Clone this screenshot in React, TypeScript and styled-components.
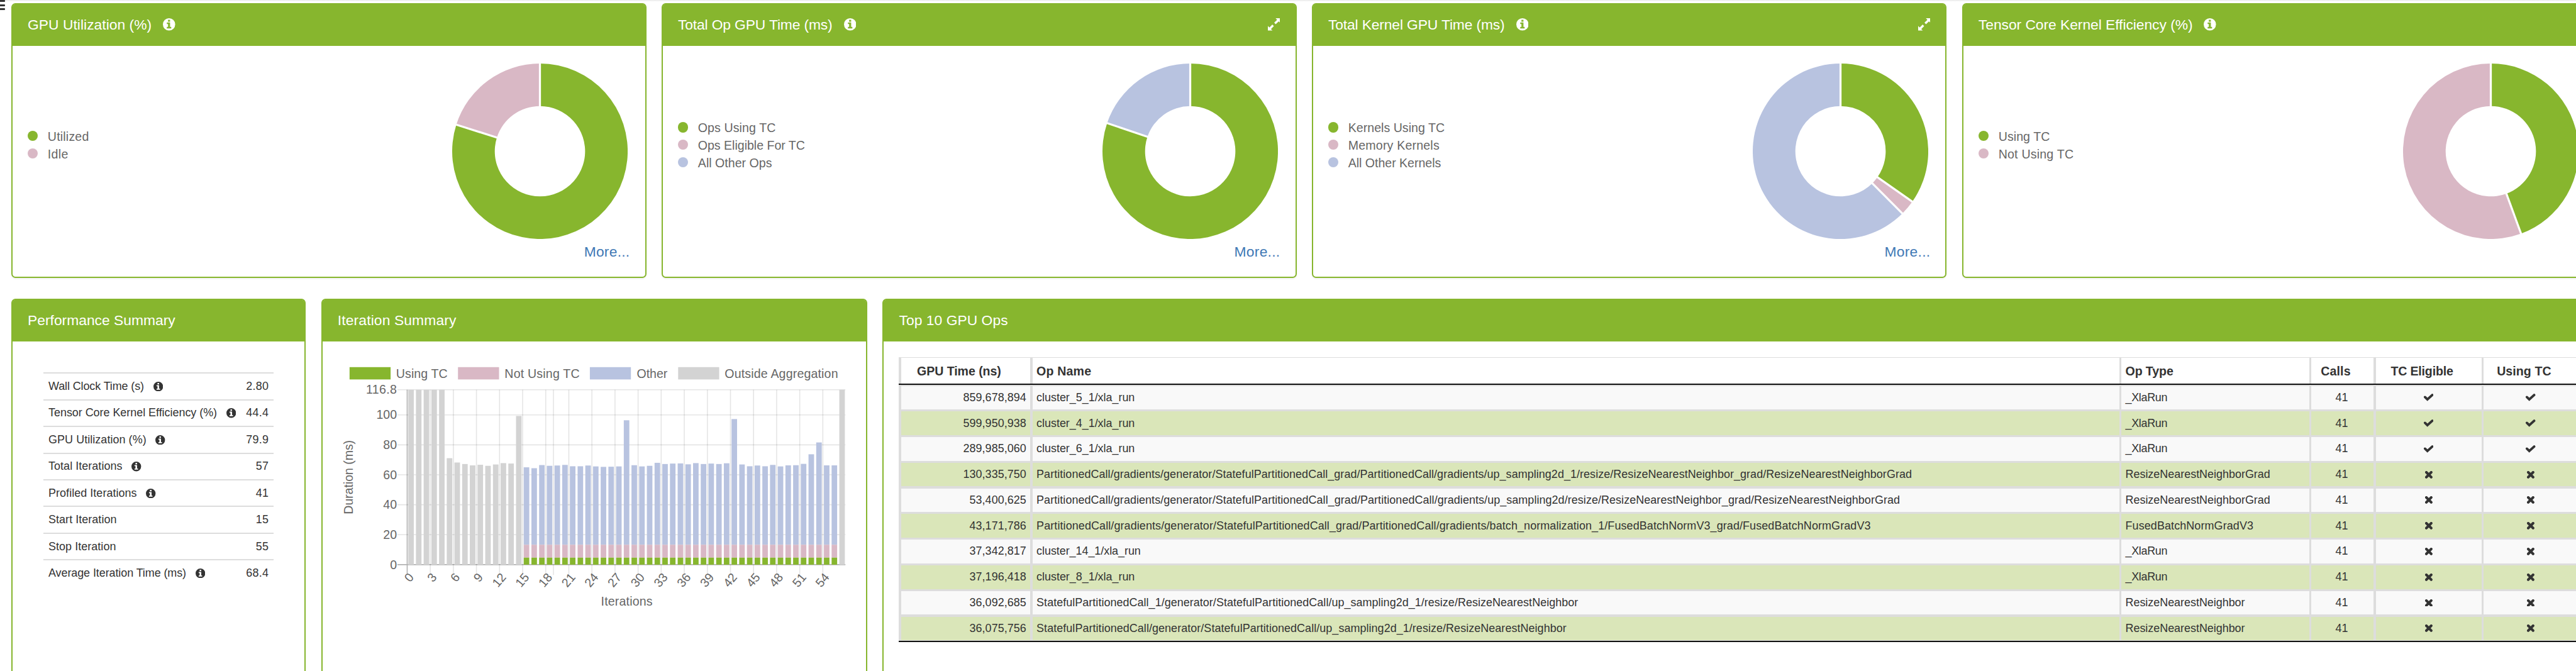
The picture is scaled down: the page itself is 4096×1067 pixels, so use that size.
import React from 'react';
import styled, { createGlobalStyle, css } from 'styled-components';

const SCALE = 4096 / 5020;
const p = (n: number) => `${+(n * SCALE).toFixed(3)}px`;

const GREEN = '#87b62e';
const PINK = '#d9b8c5';
const BLUE = '#b8c3e0';
const GRAY = '#d3d3d3';

const GlobalStyle = createGlobalStyle`
  html, body { margin: 0; background: #fff; overflow: hidden; }
  * { box-sizing: border-box; }
`;

const Page = styled.div`
  width: 4096px;
  height: 1067px;
  overflow: hidden;
  display: flex;
  flex-direction: column;
  font-family: "Liberation Sans", Arial, sans-serif;
  color: #333;
  background: #fff;
`;

const TopEdge = styled.div`
  flex: none;
  height: ${p(6)};
  background: linear-gradient(#ececec 0, #f3f3f3 2px, #fff 2px);
`;

const MenuMark = styled.div`
  position: absolute;
  left: 0;
  top: 0;
  width: ${p(10)};
  display: flex;
  flex-direction: column;
  gap: ${p(4)};
`;

const MenuBar = styled.span`
  height: ${p(4)};
  background: #333;
  border-radius: 0 1px 1px 0;
`;

const Row = styled.div<{ $height: number; $gap: number }>`
  flex: none;
  display: flex;
  gap: ${(q) => p(q.$gap)};
  height: ${(q) => p(q.$height)};
  padding-left: ${p(22)};
  margin-bottom: ${p(40)};
`;

const Card = styled.section<{ $width: number }>`
  flex: none;
  width: ${(q) => p(q.$width)};
  display: flex;
  flex-direction: column;
  background: #fff;
  border: 2px solid ${GREEN};
  border-radius: ${p(8)};
  box-shadow: 0 2px 2px rgba(0, 0, 0, 0.05);
`;

const CardHeader = styled.header`
  flex: none;
  display: flex;
  align-items: center;
  height: calc(${p(84)} - 2px);
  padding: 0 calc(${p(32)} - 2px) 2px;
  background: ${GREEN};
  border-radius: 4px 4px 0 0;
  color: #fff;
`;

const Title = styled.h3<{ $ls?: number }>`
  margin: 0 ${p(22)} 0 0;
  font-size: ${p(28)};
  font-weight: 400;
  line-height: ${p(32)};
  letter-spacing: ${(q) => q.$ls || 0}px;
  white-space: nowrap;
`;

const Spacer = styled.span`
  flex: 1;
`;

const Glyph = styled.svg<{ $w: number; $h?: number }>`
  flex: none;
  display: block;
  width: ${(q) => p(q.$w)};
  height: ${(q) => p(q.$h ?? q.$w)};
`;

const DonutBody = styled.div`
  flex: 1;
  display: flex;
  justify-content: space-between;
  align-items: flex-start;
  padding: 0 calc(${p(32)} - 2px);
`;

const Legend = styled.ul`
  list-style: none;
  margin: 0;
  padding: 0;
  height: ${p(388)};
  display: flex;
  flex-direction: column;
  justify-content: center;
`;

const LegendItem = styled.li<{ $ls: number }>`
  display: flex;
  align-items: center;
  height: ${p(34)};
  gap: ${p(19)};
  font-size: ${p(24)};
  letter-spacing: ${(q) => q.$ls}px;
  color: #666;
  white-space: nowrap;
`;

const Dot = styled.i<{ $color: string }>`
  width: ${p(20)};
  height: ${p(20)};
  margin-bottom: ${p(4)};
  border-radius: 50%;
  background: ${(q) => q.$color};
`;

const ChartColumn = styled.div`
  display: flex;
  flex-direction: column;
  align-items: flex-end;
  padding-top: ${p(34)};
`;

const DonutSvg = styled.svg`
  display: block;
  width: ${p(342)};
  height: ${p(342)};
  margin-right: ${p(4)};
`;

const MoreLink = styled.a`
  margin-top: ${p(8)};
  font-size: ${p(28)};
  line-height: ${p(32)};
  letter-spacing: 0.25px;
  color: #3f78b5;
`;

const StatBody = styled.div`
  padding: ${p(60)} ${p(60)} 0;
`;

const StatRow = styled.div<{ $ls: number }>`
  display: flex;
  align-items: center;
  height: ${p(52)};
  padding: 0 ${p(10)};
  border-top: 2px solid #ddd;
  font-size: ${p(22)};
  letter-spacing: ${(q) => q.$ls}px;
  white-space: nowrap;
`;

const StatLabel = styled.span`
  margin-right: ${p(18)};
`;

const StatValue = styled.span`
  margin-left: auto;
  letter-spacing: 0.25px;
`;

const ChartSvg = styled.svg`
  display: block;
  flex: none;
  width: ${p(1060)};
  height: ${p(642)};
  margin-left: calc(${p(2)} - 2px);
  font-family: "Liberation Sans", Arial, sans-serif;
`;

const OpsBody = styled.div`
  padding: ${p(30)} 0 0 calc(${p(32)} - 2px);
`;

const OpsTable = styled.div`
  display: flex;
  flex-direction: column;
  width: ${p(3276)};
  background: #ddd;
  padding: ${p(2)} ${p(4)} ${p(2)};
`;

const rowGrid = css`
  display: grid;
  grid-template-columns: ${[252, 2118, 366, 122, 206, 184].map(p).join(' ')};
  column-gap: ${p(4)};
`;

const Rule = styled.div`
  height: 2px;
  margin: 0 -${p(4)};
  background: #111;
`;

const HeadRow = styled.div`
  ${rowGrid}
  height: ${p(50)};
`;

const HeadCell = styled.div<{ $center?: boolean; $ls: number }>`
  display: flex;
  align-items: center;
  justify-content: ${(q) => (q.$center ? 'center' : 'flex-start')};
  padding: ${p(2)} ${(q) => p(q.$center ? 34 : 8)} 0 ${p(8)};
  background: #fff;
  font-size: ${p(24)};
  font-weight: 700;
  letter-spacing: ${(q) => q.$ls}px;
  white-space: nowrap;
`;

const OpsRow = styled.div<{ $even: boolean }>`
  ${rowGrid}
  height: ${p(46)};
  margin-bottom: ${p(4)};
  > * {
    background: ${(q) => (q.$even ? '#dae6b9' : '#f9f9f9')};
  }
  &:first-child {
    margin-top: calc(${p(4)} - 2px);
  }
  &:last-child {
    margin-bottom: ${p(2)};
  }
`;

const Cell = styled.div<{ $align?: string; $ls?: number }>`
  display: flex;
  align-items: center;
  justify-content: ${(q) => q.$align || 'flex-start'};
  padding: 0 ${p(8)};
  font-size: ${p(22)};
  letter-spacing: ${(q) => q.$ls || 0}px;
  white-space: nowrap;
`;

const CallsCell = styled(Cell)`
  padding-right: ${p(11)};
`;

const OpsRows = styled.div`
  display: flex;
  flex-direction: column;
`;

const OpsBottom = styled(Rule)`
  width: ${p(3276)};
  margin: -2px 0 0;
`;

const InfoIcon = ({ size }: { size: number }) => (
  <Glyph $w={size} viewBox="0 0 24 24">
    <path
      fill="currentColor"
      fillRule="evenodd"
      d="M12 0a12 12 0 1 1 0 24a12 12 0 1 1 0-24zM10 3h4v3.6h-4zM7.7 8.4H14V17h2.3v2.8H7.7V17H10v-5.800H7.700z"
    />
  </Glyph>
);

const ExpandIcon = () => (
  <Glyph $w={24} viewBox="0 0 24 24">
    <path fill="currentColor" d="M24 0H15l3 3-5.700 5.700 3 3L21 6l3 3zM0 24h9l-3-3 5.700-5.700-3-3L3 18l-3-3z" />
  </Glyph>
);

const CheckIcon = () => (
  <Glyph $w={19} $h={15} viewBox="0 0 19 15">
    <path d="M2.300 6.700 7 11.300 16.500 2.600" fill="none" stroke="#333" strokeWidth="4.700" strokeLinecap="round" />
  </Glyph>
);

const CrossIcon = () => (
  <Glyph $w={14.5} viewBox="0 0 14.5 14.5">
    <path d="M2.500 2.500 12 12M12 2.500 2.500 12" fill="none" stroke="#333" strokeWidth="5" strokeLinecap="round" />
  </Glyph>
);

type Slice = { label: string; color: string; share: number; ls: number };

const R = 171;
const INNER = 88;

function polar(r: number, share: number) {
  const a = share * Math.PI * 2;
  return `${(R + r * Math.sin(a)).toFixed(2)} ${(R - r * Math.cos(a)).toFixed(2)}`;
}

function Donut({ slices }: { slices: Slice[] }) {
  let start = 0;
  const arcs = slices
    .filter((s) => s.share > 0)
    .map((s) => {
      const from = start;
      const to = start + s.share;
      start = to;
      const big = s.share > 0.5 ? 1 : 0;
      return {
        color: s.color,
        from,
        d: `M${polar(R, from)}A${R} ${R} 0 ${big} 1 ${polar(R, to)}L${polar(INNER, to)}A${INNER} ${INNER} 0 ${big} 0 ${polar(INNER, from)}Z`,
      };
    });
  return (
    <DonutSvg viewBox="0 0 342 342">
      {arcs.map((a) => (
        <path key={a.d} d={a.d} fill={a.color} />
      ))}
      {arcs.map((a) => (
        <path key={a.from} d={`M${polar(INNER - 2, a.from)}L${polar(R + 2, a.from)}`} stroke="#fff" strokeWidth="4" />
      ))}
    </DonutSvg>
  );
}

type DonutData = { title: string; ls: number; expand?: boolean; more?: boolean; slices: Slice[] };

const donuts: DonutData[] = [
  {
    title: 'GPU Utilization (%)',
    ls: 0.027,
    more: true,
    slices: [
      { label: 'Utilized', color: GREEN, share: 0.799, ls: 0.18 },
      { label: 'Idle', color: PINK, share: 0.201, ls: 0.3 },
    ],
  },
  {
    title: 'Total Op GPU Time (ms)',
    ls: -0.138,
    expand: true,
    more: true,
    slices: [
      { label: 'Ops Using TC', color: GREEN, share: 0.802, ls: 0.09 },
      { label: 'Ops Eligible For TC', color: PINK, share: 0, ls: -0.02 },
      { label: 'All Other Ops', color: BLUE, share: 0.198, ls: 0.02 },
    ],
  },
  {
    title: 'Total Kernel GPU Time (ms)',
    ls: -0.135,
    expand: true,
    more: true,
    slices: [
      { label: 'Kernels Using TC', color: GREEN, share: 0.3475, ls: 0.02 },
      { label: 'Memory Kernels', color: PINK, share: 0.028, ls: 0.187 },
      { label: 'All Other Kernels', color: BLUE, share: 0.6245, ls: -0.03 },
    ],
  },
  {
    title: 'Tensor Core Kernel Efficiency (%)',
    ls: -0.045,
    slices: [
      { label: 'Using TC', color: GREEN, share: 0.444, ls: 0.07 },
      { label: 'Not Using TC', color: PINK, share: 0.556, ls: 0.2 },
    ],
  },
];

const stats: { label: string; value: string; info?: boolean; ls: number }[] = [
  { label: 'Wall Clock Time (s)', value: '2.80', info: true, ls: -0.1 },
  { label: 'Tensor Core Kernel Efficiency (%)', value: '44.4', info: true, ls: -0.025 },
  { label: 'GPU Utilization (%)', value: '79.9', info: true, ls: 0.06 },
  { label: 'Total Iterations', value: '57', info: true, ls: 0.05 },
  { label: 'Profiled Iterations', value: '41', info: true, ls: 0.05 },
  { label: 'Start Iteration', value: '15', ls: 0.05 },
  { label: 'Stop Iteration', value: '55', ls: 0.05 },
  { label: 'Average Iteration Time (ms)', value: '68.4', info: true, ls: -0.075 },
];

const GRAD = 'PartitionedCall/gradients/generator/StatefulPartitionedCall_grad/PartitionedCall/gradients/';

type Op = { time: string; name: string; nls: number; type: string; tls: number; tc: boolean };

const ops: Op[] = [
  { time: '859,678,894', name: 'cluster_5_1/xla_run', nls: -0.017, type: '_XlaRun', tls: -0.3, tc: true },
  { time: '599,950,938', name: 'cluster_4_1/xla_run', nls: -0.017, type: '_XlaRun', tls: -0.3, tc: true },
  { time: '289,985,060', name: 'cluster_6_1/xla_run', nls: -0.017, type: '_XlaRun', tls: -0.3, tc: true },
  { time: '130,335,750', name: GRAD + 'up_sampling2d_1/resize/ResizeNearestNeighbor_grad/ResizeNearestNeighborGrad', nls: 0.06, type: 'ResizeNearestNeighborGrad', tls: 0, tc: false },
  { time: '53,400,625', name: GRAD + 'up_sampling2d/resize/ResizeNearestNeighbor_grad/ResizeNearestNeighborGrad', nls: 0.067, type: 'ResizeNearestNeighborGrad', tls: 0, tc: false },
  { time: '43,171,786', name: GRAD + 'batch_normalization_1/FusedBatchNormV3_grad/FusedBatchNormGradV3', nls: 0.105, type: 'FusedBatchNormGradV3', tls: 0.109, tc: false },
  { time: '37,342,817', name: 'cluster_14_1/xla_run', nls: -0.043, type: '_XlaRun', tls: -0.3, tc: false },
  { time: '37,196,418', name: 'cluster_8_1/xla_run', nls: -0.017, type: '_XlaRun', tls: -0.3, tc: false },
  { time: '36,092,685', name: 'StatefulPartitionedCall_1/generator/StatefulPartitionedCall/up_sampling2d_1/resize/ResizeNearestNeighbor', nls: 0.045, type: 'ResizeNearestNeighbor', tls: -0.018, tc: false },
  { time: '36,075,756', name: 'StatefulPartitionedCall/generator/StatefulPartitionedCall/up_sampling2d_1/resize/ResizeNearestNeighbor', nls: 0.06, type: 'ResizeNearestNeighbor', tls: -0.018, tc: false },
];

const MAX = 116.8;
const iterations = [
  MAX, MAX, MAX, MAX, MAX, 71.1, 68.2, 67.2, 66.3, 66.7, 66, 66.9, 67.8, 67.5, 99.3,
  65, 64.4, 66.5, 66, 66.2, 66.6, 65.7, 65.7, 66.2, 65.6, 65.3, 65.4, 65.6, 96.4, 66.4,
  65.6, 66, 68, 67.2, 67.5, 67.6, 67, 67.8, 67.2, 67.5, 67.2, 67.7, 97.2, 66.9, 65.7,
  66.2, 65.7, 66.6, 65.6, 66.3, 66.4, 67.3, 73.7, 81.6, 66.3, 66.3, MAX,
];

const X0 = 794;
const STEP = 15;
const Y0 = 1101;
const yOf = (v: number) => Y0 - (v * 341) / MAX;

const seriesLegend = [
  { label: 'Using TC', color: GREEN, x: 681.7, tx: 772.4, ls: 0.09 },
  { label: 'Not Using TC', color: PINK, x: 893, tx: 983.8, ls: 0.24 },
  { label: 'Other', color: BLUE, x: 1150, tx: 1241.5, ls: -0.1 },
  { label: 'Outside Aggregation', color: GRAY, x: 1322, tx: 1412.8, ls: 0.19 },
];

function Bar({ i, from, to, color }: { i: number; from: number; to: number; color: string }) {
  return <rect x={X0 + STEP * i + 2.1} width={10.8} y={yOf(to)} height={yOf(from) - yOf(to)} fill={color} />;
}

function IterationChart() {
  const xTicks = Array.from({ length: 19 }, (_, i) => i * 3);
  return (
    <ChartSvg viewBox="628 666 1060 642" fontSize="24" fill="#666">
      {seriesLegend.map((s) => (
        <g key={s.label}>
          <rect x={s.x} y={716} width={80} height={24} fill={s.color} />
          <text x={s.tx} y={736.5} letterSpacing={s.ls}>{s.label}</text>
        </g>
      ))}
      {[20, 40, 60, 80, 100, MAX].map((v) => (
        <path key={v} d={`M775 ${yOf(v)}H1648`} stroke="#000" strokeOpacity="0.1" strokeWidth="2" />
      ))}
      {[...xTicks.slice(1), 19].map((t) => (
        <path key={t} d={`M${X0 + t * STEP} 760V1121`} stroke="#000" strokeOpacity="0.1" strokeWidth="2" />
      ))}
      <path d={`M775 ${Y0}H1648M${X0} 760V1121`} fill="none" stroke="#000" strokeOpacity="0.3" strokeWidth="2" />
      {iterations.map((v, i) =>
        i < 15 || i > 55 ? (
          <Bar key={i} i={i} from={0} to={v} color={GRAY} />
        ) : (
          <g key={i}>
            <Bar i={i} from={13.3} to={v} color={BLUE} />
            <Bar i={i} from={4.7} to={13.3} color={PINK} />
            <Bar i={i} from={0} to={4.7} color={GREEN} />
          </g>
        ),
      )}
      {[0, 20, 40, 60, 80, 100, MAX].map((v) => (
        <text key={v} x={774} y={yOf(v) + 8.3} textAnchor="end" letterSpacing={v === MAX ? 0.4 : 0}>{v}</text>
      ))}
      {xTicks.map((t) => (
        <text key={t} textAnchor="end" transform={`translate(${X0 + t * STEP + 7.5} 1120.6) rotate(-50)`} y={8.5}>{t}</text>
      ))}
      <text x={1222} y={1181} textAnchor="middle" letterSpacing={0.2}>Iterations</text>
      <text transform="translate(687.700 930.500) rotate(-90)" textAnchor="middle" letterSpacing={-0.08}>Duration (ms)</text>
    </ChartSvg>
  );
}

export default function App() {
  return (
    <Page>
      <GlobalStyle />
      <TopEdge />
      <MenuMark>
        <MenuBar />
        <MenuBar />
        <MenuBar />
      </MenuMark>
      <Row $height={536} $gap={29.8}>
        {donuts.map((d) => (
          <Card key={d.title} $width={1237.4}>
            <CardHeader>
              <Title $ls={d.ls}>{d.title}</Title>
              <InfoIcon size={24} />
              <Spacer />
              {d.expand && <ExpandIcon />}
            </CardHeader>
            <DonutBody>
              <Legend>
                {d.slices.map((s) => (
                  <LegendItem key={s.label} $ls={s.ls}>
                    <Dot $color={s.color} />
                    {s.label}
                  </LegendItem>
                ))}
              </Legend>
              <ChartColumn>
                <Donut slices={d.slices} />
                {d.more && <MoreLink>More...</MoreLink>}
              </ChartColumn>
            </DonutBody>
          </Card>
        ))}
      </Row>
      <Row $height={780} $gap={30}>
        <Card $width={574}>
          <CardHeader>
            <Title>Performance Summary</Title>
          </CardHeader>
          <StatBody>
            {stats.map((s) => (
              <StatRow key={s.label} $ls={s.ls}>
                <StatLabel>{s.label}</StatLabel>
                {s.info && <InfoIcon size={18.9} />}
                <StatValue>{s.value}</StatValue>
              </StatRow>
            ))}
          </StatBody>
        </Card>
        <Card $width={1064}>
          <CardHeader>
            <Title $ls={0.125}>Iteration Summary</Title>
          </CardHeader>
          <IterationChart />
        </Card>
        <Card $width={3342}>
          <CardHeader>
            <Title $ls={0.04}>Top 10 GPU Ops</Title>
          </CardHeader>
          <OpsBody>
            <OpsTable>
              <HeadRow>
                <HeadCell $center $ls={-0.056}>GPU Time (ns)</HeadCell>
                <HeadCell $ls={0.175}>Op Name</HeadCell>
                <HeadCell $ls={-0.08}>Op Type</HeadCell>
                <HeadCell $center $ls={0.1}>Calls</HeadCell>
                <HeadCell $center $ls={-0.168}>TC Eligible</HeadCell>
                <HeadCell $center $ls={0.08}>Using TC</HeadCell>
              </HeadRow>
              <Rule />
              <OpsRows>
                {ops.map((o, i) => (
                  <OpsRow key={o.time} $even={i % 2 === 1}>
                    <Cell $align="flex-end" $ls={0.05}>{o.time}</Cell>
                    <Cell $ls={o.nls}>{o.name}</Cell>
                    <Cell $ls={o.tls}>{o.type}</Cell>
                    <CallsCell $align="center">41</CallsCell>
                    <Cell $align="center">{o.tc ? <CheckIcon /> : <CrossIcon />}</Cell>
                    <Cell $align="center">{o.tc ? <CheckIcon /> : <CrossIcon />}</Cell>
                  </OpsRow>
                ))}
              </OpsRows>
            </OpsTable>
            <OpsBottom />
          </OpsBody>
        </Card>
      </Row>
    </Page>
  );
}
